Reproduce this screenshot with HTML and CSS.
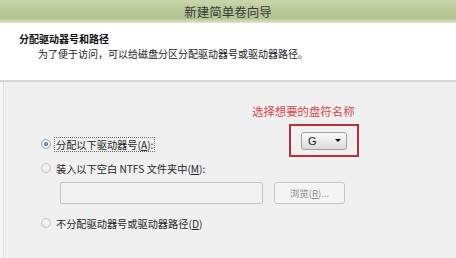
FILE: index.html
```html
<!DOCTYPE html>
<html lang="zh-CN">
<head>
<meta charset="utf-8">
<link rel="stylesheet" href="styles.css">
</head>
<body>
<div class="win">
  <div class="titlebar">新建简单卷向导</div>
  <div class="header">
    <div class="h-title">分配驱动器号和路径</div>
    <div class="h-sub">为了便于访问，可以给磁盘分区分配驱动器号或驱动器路径。</div>
  </div>
  <div class="sep"></div>
  <div class="content">
    <div class="note">选择想要的盘符名称</div>
    <div class="row1">
      <div class="opt opt-first">
        <span class="radio checked"></span>
        <span class="label focus">分配以下驱动器号(<u>A</u>):</span>
      </div>
      <div class="drivebox">
        <div class="combo"><span class="combo-val">G</span><span class="arrow"></span></div>
      </div>
    </div>
    <div class="opt opt-second">
      <span class="radio"></span>
      <span class="label">装入以下空白 NTFS 文件夹中(<u>M</u>):</span>
    </div>
    <div class="pathrow">
      <div class="pathbox"></div>
      <div class="browse">浏览(<u>R</u>)...</div>
    </div>
    <div class="opt opt-third">
      <span class="radio"></span>
      <span class="label">不分配驱动器号或驱动器路径(<u>D</u>)</span>
    </div>
  </div>
</div>
</body>
</html>
```

FILE: styles.css
```css
* { box-sizing: border-box; }
html, body { margin: 0; padding: 0; }
body {
  width: 456px;
  height: 258px;
  overflow: hidden;
  font-family: "Noto Sans CJK SC", "Noto Sans", sans-serif;
  background: #f0f0f0;
}
.win { width: 456px; height: 258px; display: flex; flex-direction: column; }

.titlebar {
  height: 23px;
  display: flex;
  align-items: center;
  justify-content: center;
  font-size: 12.5px;
  color: #383838;
  background: linear-gradient(180deg, #c9d6ad 0%, #b9c999 45%, #b3c392 80%, #dfe8c8 100%);
}

.header {
  height: 57px;
  background: #ffffff;
  padding: 8px 0 0 19px;
}
.h-title {
  font-size: 10px;
  line-height: 15px;
  font-weight: bold;
  color: #111;
}
.h-sub {
  font-size: 10px;
  line-height: 15px;
  color: #222;
  margin-left: 19px;
}

.sep { height: 2px; background: #d6d6d6; }

.content {
  flex: 1;
  background: #f0f0f0;
  box-shadow: inset 3px 0 0 #f6f6f2, inset 4px 0 0 #e2e2dc;
}

.note {
  margin-top: 22px;
  padding-left: 252px;
  font-size: 11.4px;
  line-height: 14px;
  color: #d9474d;
}

.row1 {
  display: flex;
  align-items: flex-start;
  margin-top: 6px;
}

.opt {
  display: flex;
  align-items: center;
  padding-left: 41px;
  height: 14px;
}
.opt-first { margin-top: 13px; width: 289px; }
.opt-second { margin-top: 4px; }
.opt-third { margin-top: 12px; }

.radio {
  width: 10px;
  height: 10px;
  border-radius: 50%;
  border: 1px solid #c4c4c4;
  background: radial-gradient(circle at 50% 40%, #fafafa 0%, #e4e4e4 100%);
  margin-right: 4px;
  flex: none;
  display: flex;
  align-items: center;
  justify-content: center;
}
.radio.checked { border-color: #9aa7b5; }
.radio.checked::after {
  content: "";
  width: 4px;
  height: 4px;
  border-radius: 50%;
  background: radial-gradient(circle at 40% 35%, #6fa0d2 0%, #2d5f96 100%);
}

.label {
  font-size: 10.2px;
  line-height: 13px;
  color: #262626;
  white-space: nowrap;
  padding: 0 1px;
}
.label.focus { outline: 1px dotted #666; outline-offset: 0; }

.drivebox {
  width: 70px;
  height: 33px;
  border: 2px solid #b6303c;
  display: flex;
  align-items: center;
  justify-content: center;
}
.combo {
  width: 46px;
  height: 18px;
  border: 1px solid #a0a0a0;
  border-radius: 3px;
  background: linear-gradient(180deg, #f8f8f8 0%, #ececec 50%, #dadada 100%);
  display: flex;
  align-items: center;
  padding: 0 5px 0 6px;
}
.combo-val { font-size: 11px; color: #1a1a1a; font-family: "Liberation Sans", sans-serif; flex: 1; }
.arrow {
  width: 0;
  height: 0;
  border-left: 3px solid transparent;
  border-right: 3px solid transparent;
  border-top: 3px solid #111;
}

.pathrow {
  display: flex;
  margin-top: 7px;
  padding-left: 60px;
  gap: 11px;
}
.pathbox {
  width: 203px;
  height: 22px;
  border: 1px solid #c4c4c4;
  border-radius: 2px;
  background: #f2f2f2;
}
.browse {
  width: 71px;
  height: 22px;
  border: 1px solid #c6c6c6;
  border-radius: 3px;
  background: #f4f4f4;
  font-size: 9.5px;
  color: #8c8c8c;
  display: flex;
  align-items: center;
  justify-content: center;
}
```
